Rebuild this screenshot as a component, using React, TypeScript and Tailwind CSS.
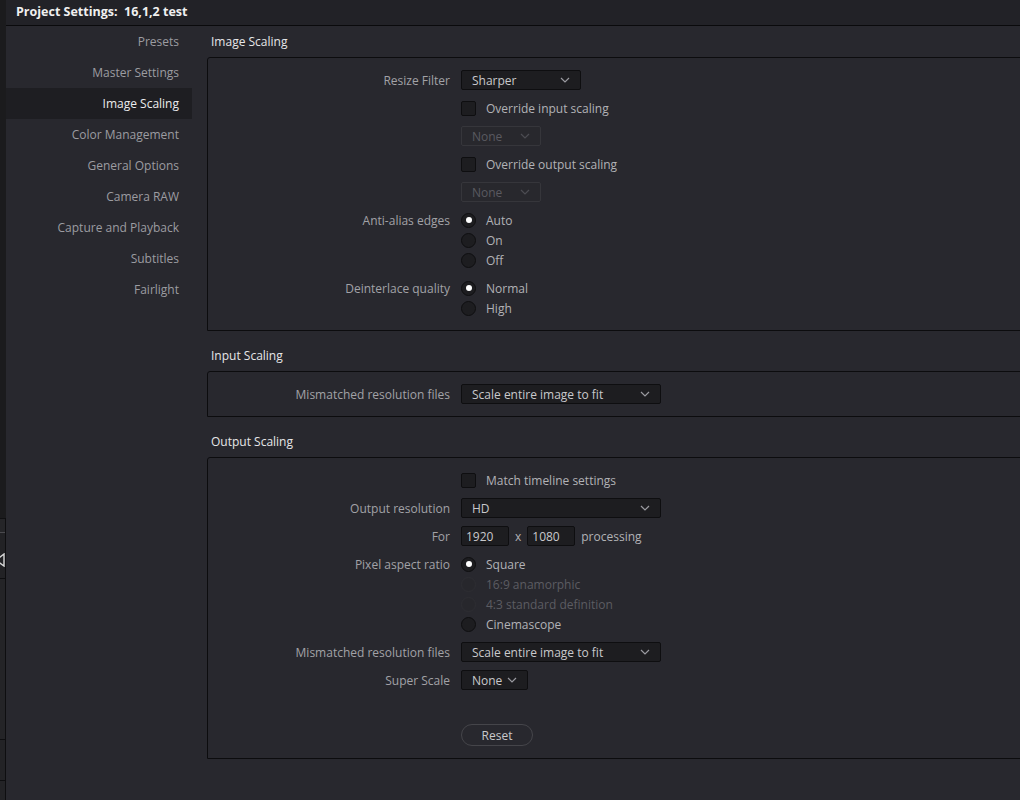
import type { ReactNode } from "react";

const font = { fontFamily: '"Open Sans", "Liberation Sans", sans-serif' };

const sidebarItems = [
  "Presets",
  "Master Settings",
  "Image Scaling",
  "Color Management",
  "General Options",
  "Camera RAW",
  "Capture and Playback",
  "Subtitles",
  "Fairlight",
];

function Chevron({ dim }: { dim?: boolean }) {
  return (
    <svg width="10" height="6" viewBox="0 0 10 6" className="shrink-0">
      <path
        d="M1 1 L5 5 L9 1"
        fill="none"
        stroke={dim ? "#4c4c52" : "#9a9aa0"}
        strokeWidth="1.2"
      />
    </svg>
  );
}

function Dropdown({ value, width, dim }: { value: string; width: string; dim?: boolean }) {
  return (
    <div
      className={`${width} h-[20px] flex items-center justify-between pl-[10px] pr-[10px] rounded-[2px] border ${
        dim ? "border-[#36363b] bg-[#28282d] text-[#5a5a60]" : "border-[#0e0e10] bg-[#1d1d20] text-[#c9c9cc]"
      }`}
    >
      <span className="leading-[18px] pt-[1px]">{value}</span>
      <Chevron dim={dim} />
    </div>
  );
}

function Checkbox({ label }: { label: string }) {
  return (
    <div className="flex items-center h-[20px]">
      <div className="w-[15px] h-[15px] rounded-[2px] border border-[#0e0e10] bg-[#1d1d20]" />
      <span className="ml-[10px] pt-[1px] text-[#b2b2b6]">{label}</span>
    </div>
  );
}

function Radio({ label, checked, disabled }: { label: string; checked?: boolean; disabled?: boolean }) {
  return (
    <div className="flex items-center h-[20px]">
      <div
        className={`w-[15px] h-[15px] rounded-full border flex items-center justify-center ${
          disabled ? "border-[#2e2e33] bg-[#27272c]" : "border-[#0e0e10] bg-[#1d1d20]"
        }`}
      >
        {checked && <div className="w-[6px] h-[6px] rounded-full bg-white" />}
      </div>
      <span className={`ml-[10px] pt-[1px] ${disabled ? "text-[#5c5c62]" : "text-[#b2b2b6]"}`}>{label}</span>
    </div>
  );
}

function Row({ label, children }: { label?: string; children: ReactNode }) {
  return (
    <div className="flex items-start">
      <div className="w-[242px] h-[20px] pt-[1px] leading-[20px] text-right text-[#a2a2a7] shrink-0">{label}</div>
      <div className="ml-[11px]">{children}</div>
    </div>
  );
}

function Section({ title, first, children }: { title: string; first?: boolean; children: ReactNode }) {
  return (
    <div className={first ? "" : "mt-[9px]"}>
      <div className="h-[31px] flex items-center pl-[4px] text-[#e6e6e8]">{title}</div>
      <div className="border border-[#0c0c0e] rounded-tl-[3px] -mr-[40px] pt-[12px] pb-[12px] flex flex-col gap-[8px]">
        {children}
      </div>
    </div>
  );
}

function LeftStrip() {
  return (
    <div className="w-[6px] shrink-0 flex flex-col bg-[#1b1b1d]">
      <div className="h-[518px] bg-[#1b1b1d]" />
      <div className="flex-1 flex flex-col border-r border-[#0e0e10]">
        <div className="h-[1px] bg-[#101012]" />
        <div className="h-[13px] bg-[#252528]" />
        <div className="h-[1px] bg-[#4a4a4e]" />
        <div className="h-[45px] bg-[#222225] relative">
          <svg width="6" height="14" viewBox="0 0 6 14" className="absolute left-0 top-[20px]">
            <path d="M4 1 L4 13 L-4 7 Z" fill="none" stroke="#d8d8d8" strokeWidth="1.4" />
          </svg>
        </div>
        <div className="h-[1px] bg-[#0e0e10]" />
        <div className="h-[160px] bg-[#242427]" />
        <div className="h-[1px] bg-[#0e0e10]" />
        <div className="h-[40px] bg-[#232326]" />
        <div className="h-[1px] bg-[#0e0e10]" />
        <div className="flex-1 bg-[#232326]" />
      </div>
    </div>
  );
}

export default function App() {
  return (
    <div className="w-[1020px] h-[800px] overflow-hidden flex bg-[#28282e] text-[12px]" style={font}>
      <LeftStrip />
      <div className="flex-1 flex flex-col min-w-0">
        <div className="h-[26px] shrink-0 bg-[#222227] border-b border-[#0a0a0c] flex items-center pl-[10px] text-[12.5px] font-bold text-[#f0f0f0]">
          Project Settings:&nbsp; 16,1,2 test
        </div>
        <div className="flex-1 flex min-h-0">
          <div className="w-[186px] shrink-0 flex flex-col">
            {sidebarItems.map((item) => (
              <div
                key={item}
                className={`h-[31px] flex items-center justify-end pr-[13px] ${
                  item === "Image Scaling" ? "bg-[#1e1e22] text-[#ececee]" : "text-[#9c9ca1]"
                }`}
              >
                {item}
              </div>
            ))}
          </div>

          <div className="flex-1 pl-[15px] min-w-0">
            <Section title="Image Scaling" first>
              <Row label="Resize Filter">
                <Dropdown value="Sharper" width="w-[120px]" />
              </Row>
              <Row>
                <Checkbox label="Override input scaling" />
              </Row>
              <Row>
                <Dropdown value="None" width="w-[80px]" dim />
              </Row>
              <Row>
                <Checkbox label="Override output scaling" />
              </Row>
              <Row>
                <Dropdown value="None" width="w-[80px]" dim />
              </Row>
              <Row label="Anti-alias edges">
                <Radio label="Auto" checked />
                <Radio label="On" />
                <Radio label="Off" />
              </Row>
              <Row label="Deinterlace quality">
                <Radio label="Normal" checked />
                <Radio label="High" />
              </Row>
            </Section>

            <Section title="Input Scaling">
              <Row label="Mismatched resolution files">
                <Dropdown value="Scale entire image to fit" width="w-[200px]" />
              </Row>
            </Section>

            <Section title="Output Scaling">
              <Row>
                <Checkbox label="Match timeline settings" />
              </Row>
              <Row label="Output resolution">
                <Dropdown value="HD" width="w-[200px]" />
              </Row>
              <Row label="For">
                <div className="flex items-center h-[20px] text-[#b2b2b6]">
                  <div className="w-[48px] h-[20px] border border-[#0e0e10] bg-[#1d1d20] rounded-[2px] pl-[4px] pt-[1px] leading-[17px] text-[#c9c9cc]">
                    1920
                  </div>
                  <span className="ml-[6px] mr-[6px] pt-[1px]">x</span>
                  <div className="w-[48px] h-[20px] border border-[#0e0e10] bg-[#1d1d20] rounded-[2px] pl-[4px] pt-[1px] leading-[17px] text-[#c9c9cc]">
                    1080
                  </div>
                  <span className="ml-[6px] pt-[1px]">processing</span>
                </div>
              </Row>
              <Row label="Pixel aspect ratio">
                <Radio label="Square" checked />
                <Radio label="16:9 anamorphic" disabled />
                <Radio label="4:3 standard definition" disabled />
                <Radio label="Cinemascope" />
              </Row>
              <Row label="Mismatched resolution files">
                <Dropdown value="Scale entire image to fit" width="w-[200px]" />
              </Row>
              <Row label="Super Scale">
                <Dropdown value="None" width="w-[67px]" />
              </Row>
              <Row>
                <div className="mt-[26px] w-[72px] h-[22px] rounded-full border border-[#45454a] flex items-center justify-center pt-[1px] text-[#c9c9cc]">
                  Reset
                </div>
              </Row>
            </Section>
          </div>
        </div>
      </div>
    </div>
  );
}
